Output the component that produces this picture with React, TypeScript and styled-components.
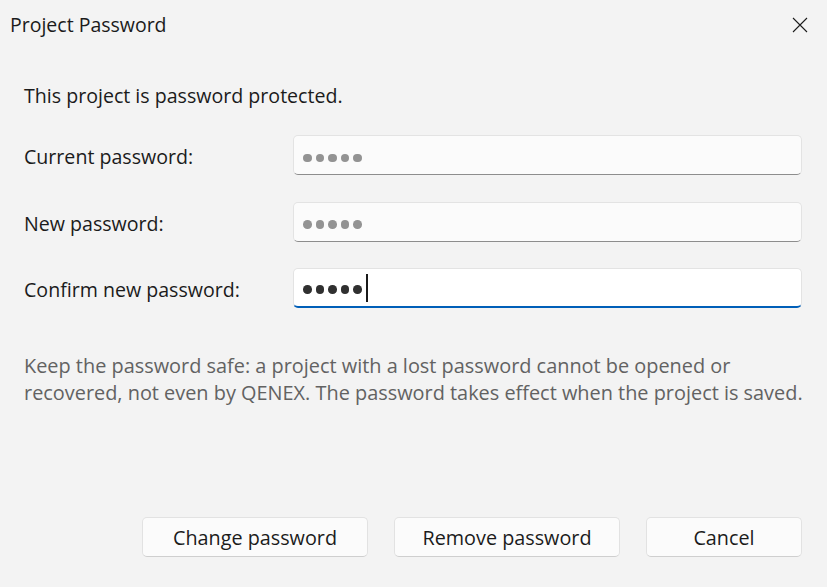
import React from "react";
import styled, { createGlobalStyle } from "styled-components";

const Global = createGlobalStyle`
  html, body { margin: 0; padding: 0; background: #f3f3f3; }
  * { box-sizing: border-box; }
`;

const Window = styled.div`
  width: 827px;
  height: 587px;
  background: #f3f3f3;
  display: flex;
  flex-direction: column;
  font-family: "Open Sans", "Noto Sans", sans-serif;
  color: #1b1b1b;
  overflow: hidden;
`;

const TitleBar = styled.div`
  height: 50px;
  display: flex;
  align-items: center;
  justify-content: space-between;
  padding-left: 10px;
`;

const Title = styled.div`
  font-size: 19.5px;
  line-height: 26px;
  color: #1b1b1b;
`;

const CloseButton = styled.button`
  width: 54px;
  height: 50px;
  border: none;
  background: transparent;
  display: flex;
  align-items: center;
  justify-content: center;
  padding: 0;
  color: #1b1b1b;
`;

const Body = styled.div`
  flex: 1;
  display: flex;
  flex-direction: column;
  padding: 0 25px 30px 24px;
`;

const Text = styled.p<{ $muted?: boolean }>`
  margin: 0;
  font-size: 19.6px;
  line-height: 27px;
  color: ${(p) => (p.$muted ? "#626262" : "#1b1b1b")};
`;

const Intro = styled(Text)`
  margin-top: 32px;
`;

const Form = styled.div`
  display: grid;
  grid-template-columns: 269px 1fr;
  row-gap: 26.5px;
  align-items: center;
  margin-top: 26px;
`;

const Label = styled.label`
  font-size: 19.6px;
  line-height: 27px;
  color: #1b1b1b;
  padding-top: 3px;
`;

const Field = styled.div<{ $focused?: boolean }>`
  height: 40px;
  border-radius: 5px;
  border: 1px solid #e3e3e3;
  border-bottom: ${(p) => (p.$focused ? "2px solid #005fb8" : "1px solid #8d8d8d")};
  background: ${(p) => (p.$focused ? "#ffffff" : "#fbfbfb")};
  display: flex;
  align-items: center;
  padding: ${(p) => (p.$focused ? "7px 0 3px 9px" : "6px 0 0 9px")};
  gap: 4px;
`;

const Dot = styled.span<{ $focused?: boolean }>`
  width: 8.6px;
  height: 8.6px;
  border-radius: 50%;
  background: ${(p) => (p.$focused ? "#303030" : "#939393")};
`;

const Caret = styled.span`
  width: 2px;
  height: 28px;
  background: #1a1a1a;
  margin-top: -3px;
`;

const Help = styled(Text)`
  margin-top: 44px;
  font-size: 19.9px;
  white-space: nowrap;
`;

const Footer = styled.div`
  margin-top: auto;
  display: flex;
  justify-content: flex-end;
  gap: 26px;
`;

const Button = styled.button<{ $w: number }>`
  width: ${(p) => p.$w}px;
  height: 40px;
  border-radius: 5px;
  border: 1px solid #e2e2e2;
  border-bottom-color: #cfcfcf;
  background: #fbfbfb;
  font-family: inherit;
  font-size: 19.8px;
  color: #1b1b1b;
  padding: 0;
`;

const Dots = ({ focused }: { focused?: boolean }) => (
  <>
    {[0, 1, 2, 3, 4].map((i) => (
      <Dot key={i} $focused={focused} />
    ))}
  </>
);

export default function App() {
  return (
    <Window>
      <Global />
      <TitleBar>
        <Title>Project Password</Title>
        <CloseButton aria-label="Close">
          <svg width="16" height="16" viewBox="0 0 16 16">
            <path d="M1 1 L15 15 M15 1 L1 15" stroke="#1b1b1b" strokeWidth="1.1" fill="none" />
          </svg>
        </CloseButton>
      </TitleBar>
      <Body>
        <Intro>This project is password protected.</Intro>
        <Form>
          <Label>Current password:</Label>
          <Field>
            <Dots />
          </Field>
          <Label>New password:</Label>
          <Field>
            <Dots />
          </Field>
          <Label>Confirm new password:</Label>
          <Field $focused>
            <Dots focused />
            <Caret />
          </Field>
        </Form>
        <Help $muted>
          Keep the password safe: a project with a lost password cannot be opened or
          <br />
          recovered, not even by QENEX. The password takes effect when the project is saved.
        </Help>
        <Footer>
          <Button $w={226}>Change password</Button>
          <Button $w={226}>Remove password</Button>
          <Button $w={156}>Cancel</Button>
        </Footer>
      </Body>
    </Window>
  );
}
